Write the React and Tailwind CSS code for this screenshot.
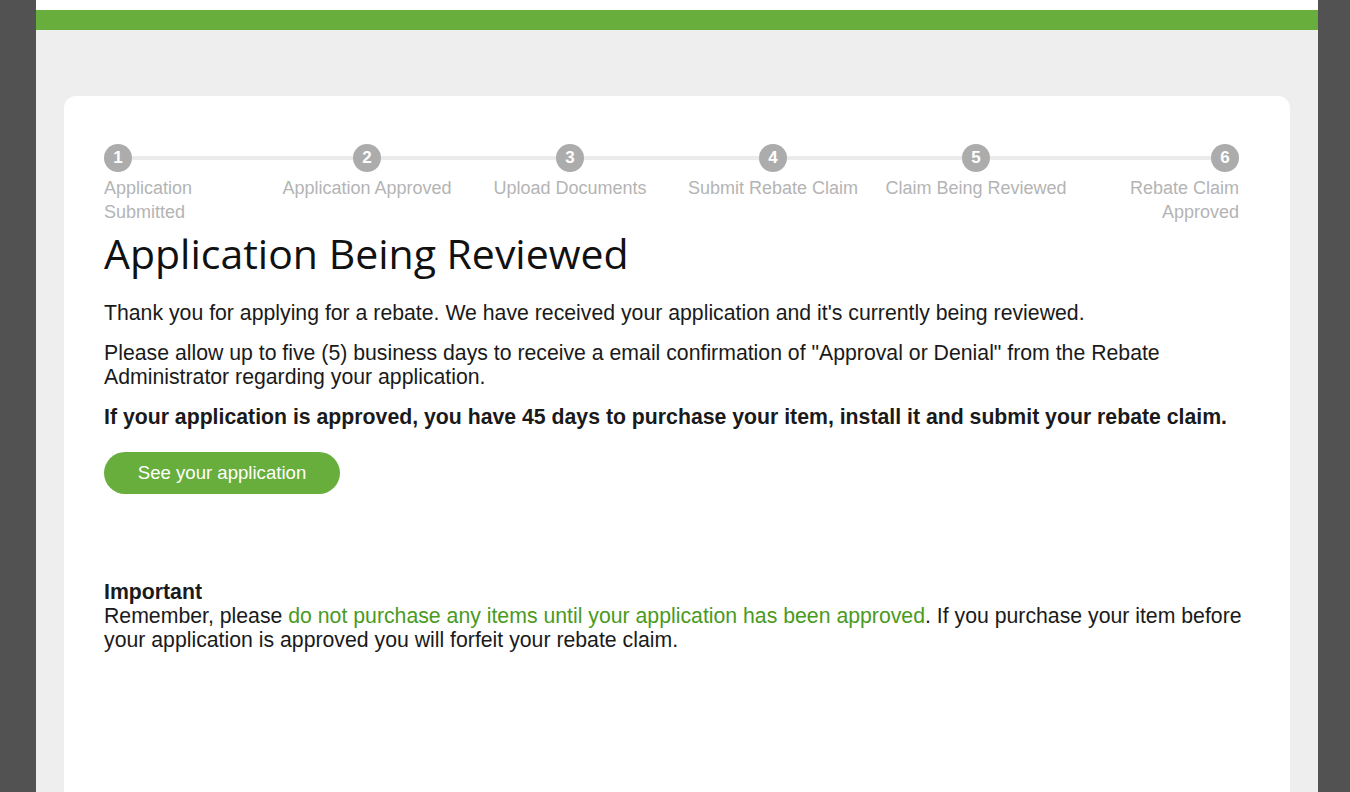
import React from 'react'

const steps = [
  { n: 1, label: 'Application Submitted', align: 'items-start text-left' },
  { n: 2, label: 'Application Approved', align: 'items-center text-center' },
  { n: 3, label: 'Upload Documents', align: 'items-center text-center' },
  { n: 4, label: 'Submit Rebate Claim', align: 'items-center text-center' },
  { n: 5, label: 'Claim Being Reviewed', align: 'items-center text-center' },
  { n: 6, label: 'Rebate Claim Approved', align: 'items-end text-right' }
]

const Stepper = () => (
  <div className='relative mr-[11px]'>
    <div className='absolute left-[14px] right-[14px] top-[12px] h-[4px] bg-[#ebebeb]' />
    <div className='relative grid grid-cols-[161.5px_203px_203px_203px_203px_161.5px]'>
      {steps.map(s => (
        <div key={s.n} className={`flex flex-col ${s.align}`}>
          <div className='flex h-[28px] w-[28px] items-center justify-center rounded-full bg-[#acacac] text-[17px] font-bold text-white'>
            {s.n}
          </div>
          <p className='mt-[4px] whitespace-nowrap text-[18px] leading-[24px] text-[#b4b4b4]'>
            {s.n === 1 || s.n === 6 ? (
              <>
                {s.label.split(' ').slice(0, s.n === 1 ? 1 : 2).join(' ')}
                <br />
                {s.label.split(' ').slice(s.n === 1 ? 1 : 2).join(' ')}
              </>
            ) : (
              s.label
            )}
          </p>
        </div>
      ))}
    </div>
  </div>
)

export default function App () {
  return (
    <div
      className='min-h-screen bg-[#525252] pl-[36px] pr-[32px]'
      style={{ fontFamily: '"Liberation Sans", Arial, sans-serif' }}
    >
      <div className='flex min-h-screen flex-col bg-[#eeeeee]'>
        <div className='h-[10px] bg-white' />
        <div className='h-[20px] bg-[#67ae3d]' />
        <div className='flex flex-1 flex-col px-[28px] pt-[66px]'>
          <div className='flex-1 rounded-t-[12px] bg-white px-[40px] pt-[48px] pb-[140px] text-[#1a1a1a]'>
            <Stepper />
            <h1
              className='mt-[5px] text-[41px] leading-[48px] font-normal text-[#111111]'
              style={{ fontFamily: '"Open Sans", sans-serif' }}
            >
              Application Being Reviewed
            </h1>
            <p className='mt-[24px] text-[21.25px] leading-[24px]'>
              Thank you for applying for a rebate. We have received your application and it's currently being reviewed.
            </p>
            <p className='mt-[16px] text-[21.25px] leading-[24px]'>
              Please allow up to five (5) business days to receive a email confirmation of "Approval or Denial" from the Rebate Administrator regarding your application.
            </p>
            <p className='mt-[16px] text-[21.25px] leading-[24px] font-bold'>
              If your application is approved, you have 45 days to purchase your item, install it and submit your rebate claim.
            </p>
            <button className='mt-[23px] h-[42px] w-[236px] rounded-full bg-[#67ae3d] text-[18.6px] text-white'>
              See your application
            </button>
            <div className='mt-[86px] text-[21.25px] leading-[24px]'>
              <p className='font-bold'>Important</p>
              <p>
                Remember, please{' '}
                <span className='text-[#4a9a1e]'>do not purchase any items until your application has been approved</span>
                . If you purchase your item before your application is approved you will forfeit your rebate claim.
              </p>
            </div>
          </div>
        </div>
      </div>
    </div>
  )
}
